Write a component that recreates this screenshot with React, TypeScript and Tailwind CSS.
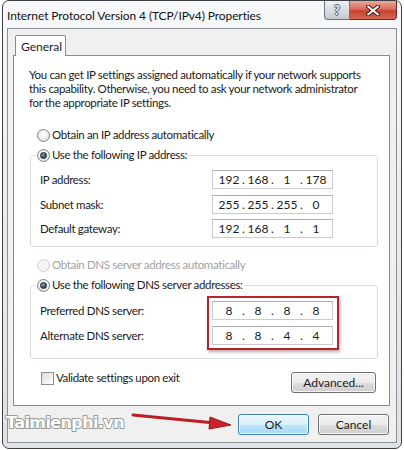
import { Fragment } from 'react';

const FONT = "font-['Lato','Liberation_Sans',sans-serif]";

function Radio({ checked, disabled }: { checked?: boolean; disabled?: boolean }) {
  return (
    <span
      className={`w-[13px] h-[13px] rounded-full border flex items-center justify-center shrink-0 ${
        disabled
          ? 'border-[#cdd0d3] bg-[#f3f4f5]'
          : 'border-[#7f8286] bg-[radial-gradient(circle_at_50%_35%,#ffffff,#d9dadb)]'
      }`}
    >
      {checked && (
        <span className="w-[7px] h-[7px] rounded-full border border-[#1c2530] bg-[radial-gradient(circle_at_40%_35%,#8ea3b6,#0f1b27)]" />
      )}
    </span>
  );
}

function IpField({ parts }: { parts: string[] }) {
  return (
    <div className="w-[121px] h-[19px] border border-[#c8ccd2] border-t-[#a9acb3] bg-white flex items-center pl-[5px] leading-none tracking-normal text-[12px]">
      {parts.map((p, i) => (
        <Fragment key={i}>
          {i > 0 && <span className="w-[7px] text-center">.</span>}
          <span className="w-[22px] text-center">{p}</span>
        </Fragment>
      ))}
    </div>
  );
}

function Btn({ label, primary, w }: { label: string; primary?: boolean; w: string }) {
  return (
    <div
      className={`${w} h-[21px] rounded-[3px] border flex items-center justify-center shadow-[inset_0_0_0_1px_rgba(255,255,255,0.8)] ${
        primary
          ? 'border-[#3c7fb1] bg-[linear-gradient(180deg,#eaf6fd_0%,#d9f0fc_50%,#bee6fd_51%,#a7d9f5_100%)]'
          : 'border-[#707070] bg-[linear-gradient(180deg,#f2f2f2_0%,#ebebeb_50%,#dddddd_51%,#cfcfcf_100%)]'
      }`}
    >
      {label}
    </div>
  );
}

export default function App() {
  return (
    <div className={`relative w-[404px] h-[450px] bg-white overflow-hidden ${FONT} text-[12px] text-[#1b1b1b]`}>
      {/* window frame */}
      <div className="ml-[2px] w-[400px] h-[449px] rounded-[7px] border border-[#3d4046] bg-[linear-gradient(180deg,#f7f8f9_0%,#eceef0_40%,#dfe2e6_100%)] flex flex-col">
        {/* title bar */}
        <div className="h-[27px] flex items-start">
          <span className="pl-[4px] pt-[7px] leading-[15px] tracking-[-0.1px] text-[#141414]">
            Internet Protocol Version 4 (TCP/IPv4) Properties
          </span>
          <div className="ml-auto mr-[4px] flex">
            <div className="w-[26px] h-[19px] rounded-bl-[4px] border border-t-0 border-[#6f747b] bg-[linear-gradient(180deg,#eef0f2_0%,#dadde1_50%,#c5c9ce_100%)] flex items-center justify-center">
              <span className="font-bold text-[13px] leading-none text-[#eef0f2] [text-shadow:1px_0_#5d6268,-1px_0_#5d6268,0_1px_#5d6268,0_-1px_#5d6268]">?</span>
            </div>
            <div className="w-[47px] h-[19px] rounded-br-[4px] border border-l-0 border-t-0 border-[#6b2b24] bg-[linear-gradient(180deg,#e9a899_0%,#d86e5d_45%,#c7402f_55%,#d26a55_100%)] flex items-center justify-center">
              <svg width="14" height="11" viewBox="0 0 14 11">
                <path d="M2 1.5 L12 9.5 M12 1.5 L2 9.5" stroke="#4a1a14" strokeWidth="4" strokeLinecap="round" />
                <path d="M2 1.5 L12 9.5 M12 1.5 L2 9.5" stroke="#ffffff" strokeWidth="2" strokeLinecap="round" />
              </svg>
            </div>
          </div>
        </div>

        {/* client area */}
        <div className="mx-[4px] h-[415px] border border-[#8b9097] bg-[#f0f0f0] flex flex-col text-[11.5px] tracking-[-0.35px]">
          {/* tab strip */}
          <div className="pt-[6px] pl-[7px] flex">
            <div className="relative z-10 -mb-px w-[51px] h-[21px] border border-b-0 border-[#898c95] rounded-t-[2px] bg-white pl-[5px] pt-[3px] leading-[15px] text-[12px] tracking-normal">
              General
            </div>
          </div>

          {/* tab panel */}
          <div className="ml-[5px] w-[377px] h-[351px] border border-[#898c95] bg-white flex flex-col">
            <p className="pt-[12px] pl-[15px] leading-[14px] whitespace-nowrap">
              You can get IP settings assigned automatically if your network supports
              <br />
              this capability. Otherwise, you need to ask your network administrator
              <br />
              for the appropriate IP settings.
            </p>

            <div className="mt-[17px] ml-[23px] h-[16px] flex items-center gap-[2px]">
              <Radio />
              <span>Obtain an IP address automatically</span>
            </div>

            <fieldset className="mt-[4px] ml-[16px] w-[348px] border border-[#d5dfe5] rounded-[3px] pl-[5px] pb-[8px]">
              <legend className="px-[1px]">
                <span className="h-[16px] flex items-center gap-[2px]">
                  <Radio checked />
                  <span>Use the following IP address:</span>
                </span>
              </legend>
              {[
                { label: 'IP address:', parts: ['192', '168', '1', '178'], mt: 'mt-[7px]' },
                { label: 'Subnet mask:', parts: ['255', '255', '255', '0'], mt: 'mt-[6px]' },
                { label: 'Default gateway:', parts: ['192', '168', '1', '1'], mt: 'mt-[5px]' },
              ].map((r) => (
                <div key={r.label} className={`${r.mt} h-[19px] flex items-center`}>
                  <span className="pl-[4px] w-[176px]">{r.label}</span>
                  <IpField parts={r.parts} />
                </div>
              ))}
            </fieldset>

            <div className="mt-[10px] ml-[23px] h-[16px] flex items-center gap-[2px] text-[#a2a2a2]">
              <Radio disabled />
              <span>Obtain DNS server address automatically</span>
            </div>

            <fieldset className="mt-[4px] ml-[16px] w-[348px] border border-[#d5dfe5] rounded-[3px] pl-[5px] pb-[13px]">
              <legend className="px-[1px]">
                <span className="h-[16px] flex items-center gap-[2px]">
                  <Radio checked />
                  <span>Use the following DNS server addresses:</span>
                </span>
              </legend>
              <div className="mt-[8px] flex">
                <div className="w-[176px] pl-[4px] flex flex-col gap-[6px]">
                  <span className="h-[19px] flex items-center">Preferred DNS server:</span>
                  <span className="h-[19px] flex items-center">Alternate DNS server:</span>
                </div>
                <div className="relative flex flex-col gap-[6px]">
                  <IpField parts={['8', '8', '8', '8']} />
                  <IpField parts={['8', '8', '4', '4']} />
                  {/* red highlight */}
                  <div className="absolute -left-[5px] -top-[5px] -right-[6px] -bottom-[5px] border-2 border-[#b3262c] shadow-[1px_2px_3px_rgba(80,0,0,0.35)]" />
                </div>
              </div>
            </fieldset>

            <div className="mt-[12px] ml-[27px] mr-[13px] flex items-start justify-between">
              <div className="h-[14px] flex items-center gap-[2px]">
                <span className="w-[13px] h-[13px] border border-[#8e8f8f] bg-[linear-gradient(135deg,#dcdcdc,#ffffff)] shrink-0" />
                <span>Validate settings upon exit</span>
              </div>
              <div className="mt-[1px] text-[12px] tracking-normal">
                <Btn label="Advanced..." w="w-[85px]" />
              </div>
            </div>
          </div>

          {/* dialog buttons */}
          <div className="pt-[8px] pr-[7px] flex justify-end gap-[9px] text-[12px] tracking-normal">
            <Btn label="OK" primary w="w-[71px]" />
            <Btn label="Cancel" w="w-[71px]" />
          </div>
        </div>
      </div>

      {/* watermark */}
      <svg className="absolute left-[3px] top-[410px]" width="130" height="24" viewBox="0 0 130 24">
        <text
          x="3"
          y="18"
          fontFamily="'DejaVu Sans', sans-serif"
          fontWeight="bold"
          fontSize="16"
          letterSpacing="-0.6"
          fill="#ffffff"
          stroke="#9a9a9a"
          strokeWidth="2"
          paintOrder="stroke"
          strokeLinejoin="round"
        >
          Taimienphi.vn
        </text>
      </svg>

      {/* red arrow */}
      <svg className="absolute left-[125px] top-[405px]" width="115" height="30" viewBox="0 0 115 30">
        <path d="M8 10 L95 18.5" stroke="#b81f27" strokeWidth="3" strokeLinecap="round" />
        <path d="M85 12 L106 20 L84 24 Z" fill="#c8222b" stroke="#9c1a20" strokeWidth="1" strokeLinejoin="round" />
      </svg>
    </div>
  );
}
